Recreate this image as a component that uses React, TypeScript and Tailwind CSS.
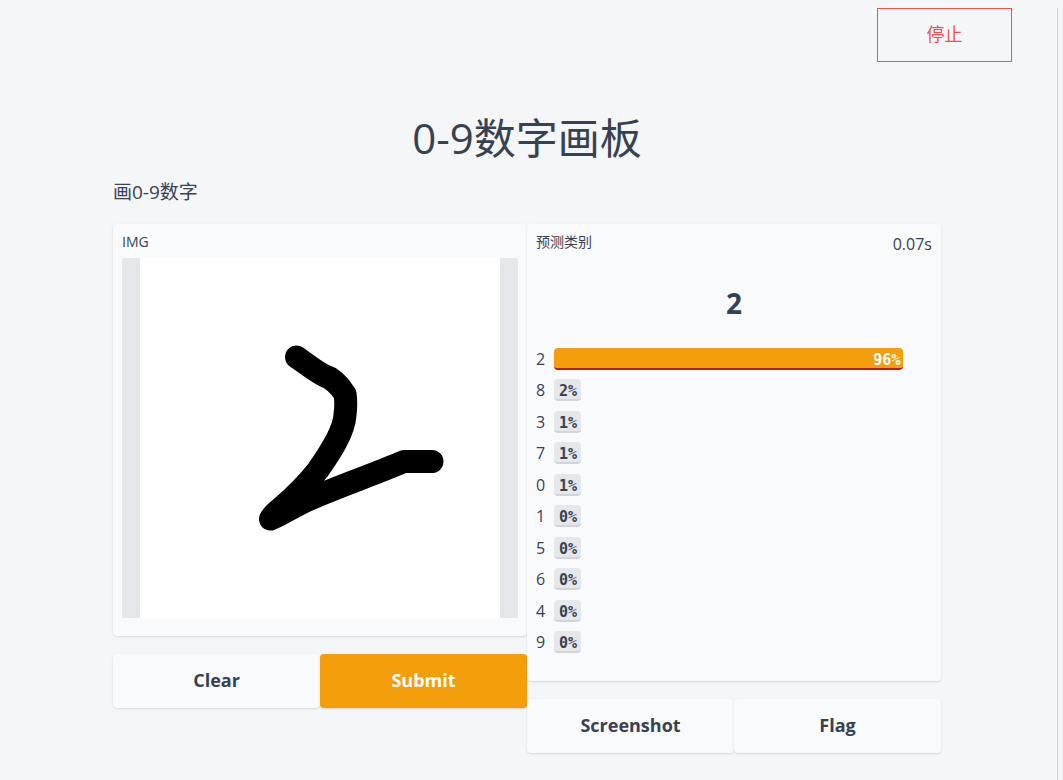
import { useState } from 'react'
import clsx from 'clsx'

interface Prediction {
  label: string
  confidence: number
}

const predictions: Prediction[] = [
  { label: '2', confidence: 96 },
  { label: '8', confidence: 2 },
  { label: '3', confidence: 1 },
  { label: '7', confidence: 1 },
  { label: '0', confidence: 1 },
  { label: '1', confidence: 0 },
  { label: '5', confidence: 0 },
  { label: '6', confidence: 0 },
  { label: '4', confidence: 0 },
  { label: '9', confidence: 0 },
]

const buttonClass = 'h-[54px] flex-1 rounded pb-[2px] text-[18px] font-bold shadow'

function Sketchpad({ cleared }: { cleared: boolean }) {
  return (
    <div className="flex h-[360px] justify-center bg-[#e5e7eb]">
      <svg viewBox="0 0 360 360" className="h-[360px] w-[360px] bg-white" aria-label="IMG">
        {!cleared && (
          <path
            d="M156.5 99C165 105 174 112 183 117C192 120 200 128 205 136C206 142 206 149 205 157C204 174 190 195 178 212C167 226 155 238 141 250C136 254 132 258 130.5 261C143 256 152 249 170 241C202 227 235 216 264 203.5L292 203.5"
            fill="none"
            stroke="#000"
            strokeWidth="23"
            strokeLinecap="round"
            strokeLinejoin="round"
          />
        )}
      </svg>
    </div>
  )
}

function ConfidenceRow({ label, confidence, top }: Prediction & { top: boolean }) {
  return (
    <li className="flex flex-1 items-center">
      <span className="w-[18px] text-[16px]">{label}</span>
      <div className="flex-1 pr-[14px]">
        <div
          className={clsx(
            'h-[22px] min-w-[27px] rounded border-b-2 text-right font-["DejaVu_Sans_Mono",monospace] text-[15px] leading-[24px] font-bold',
            top
              ? 'border-[#b91c1c] bg-[#f59e0b] pr-[3px] text-white'
              : 'border-[#d1d5db] bg-[#e5e7eb] pr-1',
          )}
          style={{ width: `${confidence}%` }}
        >
          {confidence}%
        </div>
      </div>
    </li>
  )
}

export default function App() {
  const [cleared, setCleared] = useState(false)

  return (
    <div className='min-h-screen bg-[#f4f6f8] pt-2 pr-[5px] font-["Open_Sans","Noto_Sans_CJK_SC",sans-serif] text-[#374151]'>
      <div className="min-h-[772px] border-r border-[#d1d5db] pr-[3px]">
        <div className="flex justify-end pr-[42px]">
          <button className="h-[54px] w-[135px] border border-[#ef5350] pb-[2px] text-[18px] text-[#ef5350]">
            停止
          </button>
        </div>

        <main className="mx-auto mt-[46px] max-w-[828px]">
          <h1 className="text-center text-[42px] leading-[60px]">0-9数字画板</h1>
          <p className="mt-[10px] mb-[18px] text-[19px] leading-[28px]">画0-9数字</p>

          <div className="flex items-start">
            <section className="flex-1">
              <div className="rounded bg-[#f9fafc] px-[9px] pt-2 pb-[18px] shadow">
                <h2 className="h-[26px] text-[14px] leading-[20px]">IMG</h2>
                <Sketchpad cleared={cleared} />
              </div>
              <div className="mt-[18px] flex">
                <button
                  className={clsx(buttonClass, 'bg-[#f9fafc]')}
                  onClick={() => setCleared(true)}
                >
                  Clear
                </button>
                <button className={clsx(buttonClass, 'bg-[#f59e0b] text-white')}>Submit</button>
              </div>
            </section>

            <section className="flex-1">
              <div className="rounded bg-[#f9fafc] px-[9px] pt-2 pb-[23px] shadow">
                <div className="flex h-[42px] justify-between">
                  <h2 className="text-[14px] leading-[20px]">预测类别</h2>
                  <span className="text-[16px] leading-[24px]">0.07s</span>
                </div>
                <div className="h-[69px] text-center text-[28px] leading-[58px] font-bold">2</div>
                <ul className="flex h-[315px] flex-col">
                  {predictions.map((p, i) => (
                    <ConfidenceRow key={p.label} {...p} top={i === 0} />
                  ))}
                </ul>
              </div>
              <div className="mt-[18px] flex">
                <button className={clsx(buttonClass, 'bg-[#f9fafc]')}>Screenshot</button>
                <button className={clsx(buttonClass, 'bg-[#f9fafc]')}>Flag</button>
              </div>
            </section>
          </div>
        </main>
      </div>
    </div>
  )
}
